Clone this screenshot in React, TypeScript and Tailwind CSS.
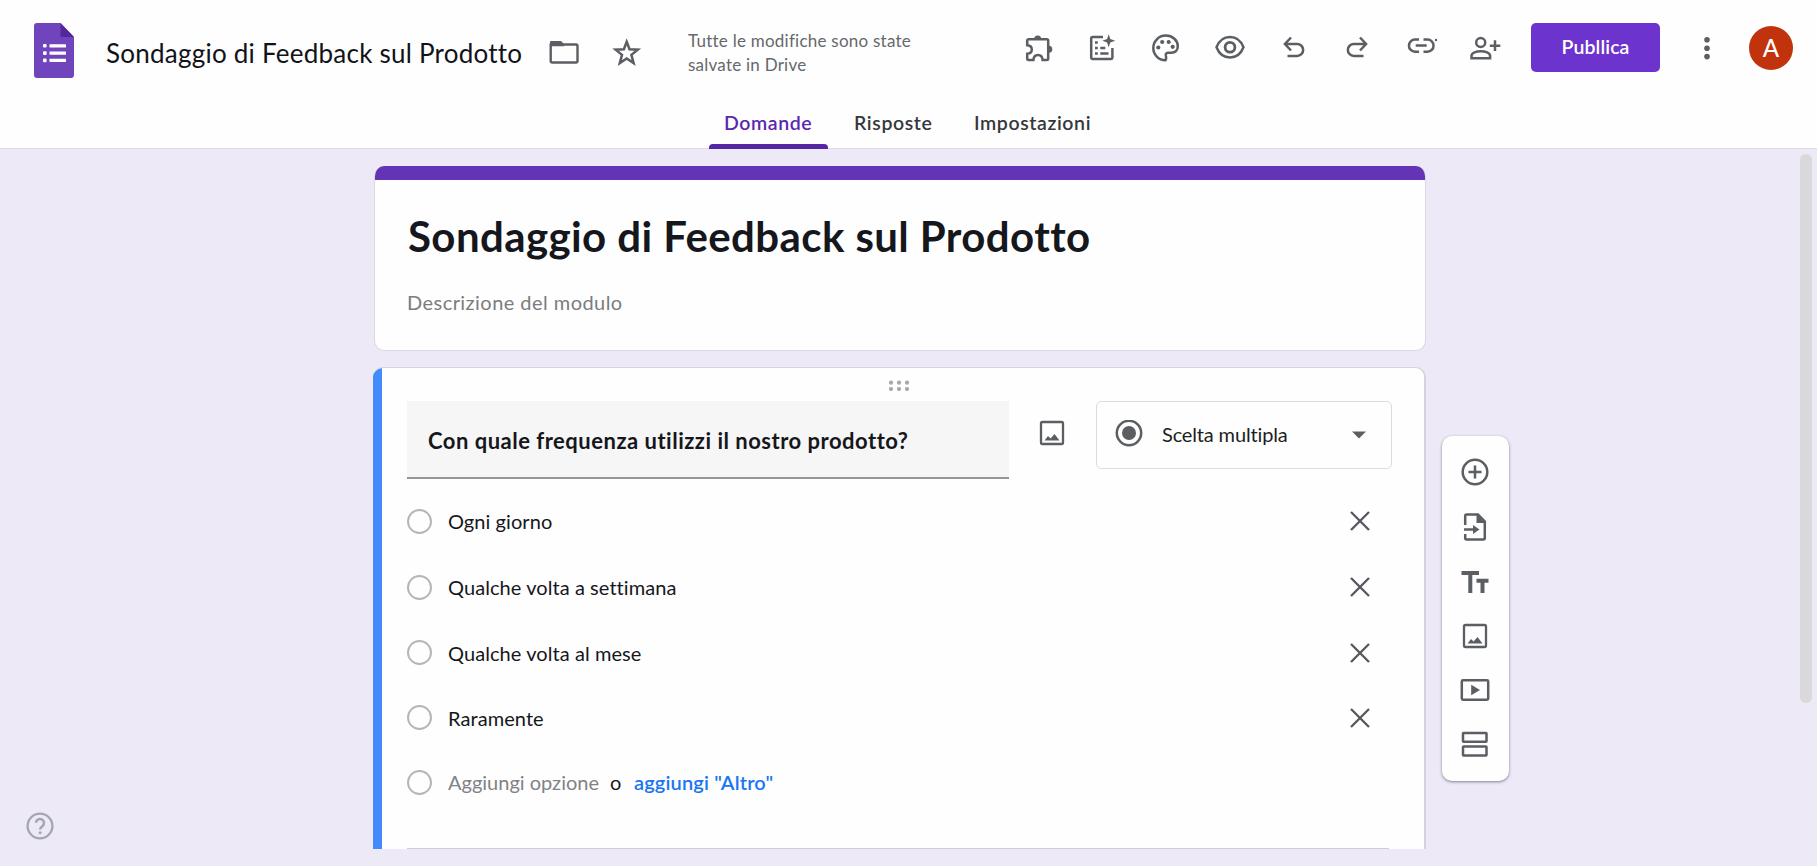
import React from "react";

type IconProps = {
  w: number;
  h: number;
  className?: string;
  children: React.ReactNode;
};

const Icon = ({ w, h, className = "", children }: IconProps) => (
  <svg
    width={w}
    height={h}
    viewBox={`0 0 ${w} ${h}`}
    fill="none"
    stroke="currentColor"
    strokeWidth={2.5}
    className={`shrink-0 ${className}`}
  >
    {children}
  </svg>
);

const FormsLogo = () => (
  <svg width="40" height="55" viewBox="0 0 40 55" className="ml-[34px] mt-[23px] shrink-0">
    <path d="M3 0H26.500L40 14V52a3 3 0 0 1-3 3H3a3 3 0 0 1-3-3V3a3 3 0 0 1 3-3z" fill="#7044bd" />
    <path d="M26.500 0L40 14H26.500z" fill="#53289b" />
    <g fill="#fff">
      <rect x="9" y="21" width="3.600" height="3.600" rx="1" />
      <rect x="9" y="28.300" width="3.600" height="3.600" rx="1" />
      <rect x="9" y="35.600" width="3.600" height="3.600" rx="1" />
      <rect x="15.500" y="21.200" width="16.500" height="3.200" rx="0.500" />
      <rect x="15.500" y="28.500" width="16.500" height="3.200" rx="0.500" />
      <rect x="15.500" y="35.800" width="16.500" height="3.200" rx="0.500" />
    </g>
  </svg>
);

const ImageIcon = ({ className = "" }: { className?: string }) => (
  <Icon w={26} h={26} className={className}>
    <rect x="2" y="2" width="22" height="22" rx="1.500" strokeWidth={2.3} />
    <path d="M5.500 20.500L9 16l2.600 2.500L15.500 14l5 6.500z" fill="currentColor" stroke="none" />
  </Icon>
);

const Header = () => (
  <header className="h-[149px] border-b border-[#dedbe4] bg-[#fefefe]">
    <div className="flex h-[100px] items-start text-[#5b5e63]">
      <FormsLogo />
      <h1 className="ml-8 mt-[36px] w-[430px] whitespace-nowrap text-[26px] leading-[34px] tracking-[0.24px] text-[#111318]">
        Sondaggio di Feedback sul Prodotto
      </h1>
      <Icon w={30} h={24} className="ml-[13px] mt-[40px]">
        <path d="M1.700 3.500V21a1.500 1.500 0 0 0 1.500 1.500H27a1.500 1.500 0 0 0 1.500-1.500V6a1.500 1.500 0 0 0-1.500-1.500H14" strokeWidth={2.400} />
        <path d="M2 1H12l3 3v2.200H1V2a1 1 0 0 1 1-1z" fill="currentColor" stroke="none" />
      </Icon>
      <Icon w={30} h={30} className="ml-[33px] mt-[38px]">
        <path
          d="M14.700 3.800L17.500 11.300L25.800 11.700L19.400 16.900L21.600 25L14.700 20.400L7.800 25L10 16.900L3.600 11.700L11.900 11.300z"
          strokeWidth={2.500}
        />
      </Icon>
      <p className="ml-[46px] mt-[29px] w-[280px] text-[17px] leading-[23.500px] tracking-[0.24px] text-[#65686c]">
        Tutte le modifiche sono state
        <br />
        salvate in Drive
      </p>

      <Icon w={30} h={30} className="ml-[56px] mt-[33px]">
        <path
          d="M4.500 6.200H22.800a1.400 1.400 0 0 1 1.400 1.400V25.600a1.400 1.400 0 0 1-1.400 1.400H18.600c-.2-3.200-1.700-5-4.600-5s-4.400 1.800-4.600 5H4.600A1.400 1.400 0 0 1 3.200 25.600V20.800c2.800-.2 4.600-1.700 4.600-4.300s-1.800-4.100-4.600-4.300V7.600a1.400 1.400 0 0 1 1.300-1.400z"
        />
        <path d="M10.200 6a3.500 3.500 0 0 1 7 0zM24.800 12.800a3.500 3.500 0 0 1 0 7z" fill="currentColor" stroke="none" />
      </Icon>
      <Icon w={30} h={30} className="ml-[34px] mt-[33px]">
        <path d="M15 4H4.600A1.400 1.400 0 0 0 3.200 5.400V24.600A1.400 1.400 0 0 0 4.600 26H23a1.400 1.400 0 0 0 1.400-1.400V15" />
        <path
          d="M20.700 1.300L22.300 6L27.200 7.700L22.300 9.400L20.700 14.300L19.100 9.400L14.300 7.700L19.100 6z"
          fill="currentColor"
          stroke="none"
        />
        <path d="M7 9.500h2.800M7 15h2.800M7 20.500h2.800M12.300 15h5M12.300 20.500h8.200" />
      </Icon>
      <Icon w={30} h={30} className="ml-[33px] mt-[33px]">
        <path d="M14.500 27.300C7.500 27 2.300 21.700 2.300 15S7.700 2.600 14.700 2.600S26.800 7.400 26.800 13.300c0 4-2.700 6.400-6.300 6.400h-3.200c-1.700 0-2.700 1.100-2.500 2.700.3 1.800.9 3.100-.3 4.900z" />
        <g fill="currentColor" stroke="none">
          <circle cx="7.300" cy="14.500" r="2.100" />
          <circle cx="11.200" cy="9" r="2.100" />
          <circle cx="17.700" cy="9" r="2.100" />
          <circle cx="21.700" cy="13.800" r="2.100" />
        </g>
      </Icon>
      <Icon w={30} h={24} className="ml-[34px] mt-[35px]">
        <path d="M1.500 12.300C4 6 9 2.100 15 2.100S26 6 28.500 12.300C26 18.600 21 22.500 15 22.500S4 18.600 1.500 12.300z" />
        <circle cx="15" cy="12.300" r="4.900" strokeWidth={2.800} />
      </Icon>
      <Icon w={22} h={22} className="ml-[38px] mt-[36px]">
        <path d="M8 1.500L1.900 8L8 14.500M2.500 8H14.200a5.900 5.900 0 0 1 0 11.900H4.500" />
      </Icon>
      <Icon w={22} h={22} className="ml-[41px] mt-[36px]">
        <path d="M14 1.500L20.100 8L14 14.500M19.500 8H7.800a5.900 5.900 0 0 0 0 11.900H17.500" />
      </Icon>
      <Icon w={32} h={20} className="ml-[38px] mt-[36px]">
        <path d="M13 3.600H9a6 6 0 0 0 0 12.100h4M17.500 3.600h4a6 6 0 0 1 0 12.100h-4M9.700 9.600h11" />
        <circle cx="30" cy="4" r="1.200" fill="currentColor" stroke="none" />
      </Icon>
      <Icon w={32} h={26} className="ml-[31px] mt-[35px]">
        <circle cx="11.700" cy="7.500" r="4.500" />
        <path d="M2.500 23.300V20.800c0-3.200 5-4.600 9.300-4.600s9.300 1.400 9.300 4.600V23.300zM26 5.300V16M20.800 10.700H31.300" />
      </Icon>
      <button className="ml-[30px] mt-[23px] h-[49px] w-[129px] rounded-[5px] bg-[#6c33cf] pb-px text-[19.500px] font-semibold tracking-[0.1px] text-white">
        Publlica
      </button>
      <Icon w={8} h={26} className="ml-[43px] mt-[35px]">
        <g fill="currentColor" stroke="none">
          <circle cx="4" cy="4.700" r="2.800" />
          <circle cx="4" cy="13.200" r="2.800" />
          <circle cx="4" cy="21.600" r="2.800" />
        </g>
      </Icon>
      <div className="ml-[38px] mt-[26px] flex size-11 items-center justify-center rounded-full bg-[#c1330d] text-[24px] font-medium text-white">
        A
      </div>
    </div>
    <nav className="ml-[709px] flex h-[49px] whitespace-nowrap text-[19.500px] font-semibold leading-[46px] tracking-[0.6px] text-[#35373c]">
      <div className="w-[119px] shrink-0 text-[#5a27b0]">
        <div className="h-11 pl-[15px]">Domande</div>
        <div className="h-[5px] rounded-t-[4px] bg-[#5426a4]" />
      </div>
      <div className="ml-[26px] w-[120px]">Risposte</div>
      <div className="w-[120px]">Impostazioni</div>
    </nav>
  </header>
);

const TitleCard = () => (
  <section className="h-[185px] w-[1052px] overflow-hidden rounded-[10px] border border-t-0 border-[#dcd8e4] bg-[#fefefe]">
    <div className="h-[14px] bg-[#6434b6]" />
    <h2 className="ml-[33px] mt-[31px] whitespace-nowrap text-[42px] font-bold leading-[50px] tracking-[0.4px] text-[#15171c]">
      Sondaggio di Feedback sul Prodotto
    </h2>
    <p className="ml-[32px] mt-[29px] text-[20px] leading-6 tracking-[0.45px] text-[#7a7c80]">Descrizione del modulo</p>
  </section>
);

const Option = ({ label, className }: { label: string; className: string }) => (
  <div className={`flex items-center ${className}`}>
    <span className="size-[25px] rounded-full border-2 border-[#b6b6b9]" />
    <span className="ml-4 text-[20px] leading-6 tracking-[0.07px] text-[#15171c]">{label}</span>
    <Icon w={22} h={22} className="ml-auto mr-[21px] text-[#55585e]">
      <path d="M2 2L20 20M20 2L2 20" strokeWidth={2.300} />
    </Icon>
  </div>
);

const QuestionCard = () => (
  <section className="-ml-px h-[482px] w-[1053px] overflow-hidden rounded-t-[10px] border-r-2 border-t border-[#d6d3de] bg-[#fefefe]">
    <div className="flex h-full border-l-[9px] border-[#438bfb] pl-[25px]">
      <div className="w-[985px] shrink-0">
        <div className="flex h-[33px] justify-center pr-[2px] pt-[12px]">
          <Icon w={22} h={12} className="text-[#a6a6a9]">
            <g fill="currentColor" stroke="none">
              <circle cx="3" cy="2.700" r="2.100" />
              <circle cx="11" cy="2.700" r="2.100" />
              <circle cx="19" cy="2.700" r="2.100" />
              <circle cx="3" cy="9" r="2.100" />
              <circle cx="11" cy="9" r="2.100" />
              <circle cx="19" cy="9" r="2.100" />
            </g>
          </Icon>
        </div>
        <div className="flex h-[78px] items-start">
          <div className="h-[78px] w-[602px] shrink-0 border-b-2 border-[#94959b] bg-[#f6f6f6] pl-[21px] text-[22px] font-bold leading-[80px] tracking-[0.5px] text-[#15171c]">
            Con quale frequenza utilizzi il nostro prodotto?
          </div>
          <ImageIcon className="ml-[30px] mt-[19px] text-[#5b5e63]" />
          <div className="ml-[31px] flex h-[68px] w-[296px] shrink-0 items-center rounded-[5px] border border-[#dcdce0] pb-[2px] pl-[18px] text-[#5b5e63]">
            <Icon w={28} h={28}>
              <circle cx="14" cy="13" r="12.200" />
              <circle cx="14" cy="13" r="7" fill="currentColor" stroke="none" />
            </Icon>
            <span className="ml-[19px] text-[20px] tracking-[-0.15px] text-[#1c1e22]">Scelta multipla</span>
            <Icon w={14} h={8} className="ml-auto mr-[25px] mt-[2px]">
              <path d="M0 .5h14L7 7.500z" fill="currentColor" stroke="none" />
            </Icon>
          </div>
        </div>
        <Option label="Ogni giorno" className="mt-[9px] h-[66px]" />
        <Option label="Qualche volta a settimana" className="h-[66px]" />
        <Option label="Qualche volta al mese" className="h-[65px]" />
        <Option label="Raramente" className="h-[65px]" />
        <div className="flex h-[65px] items-center whitespace-nowrap text-[20px] leading-6">
          <span className="size-[25px] rounded-full border-2 border-[#b6b6b9]" />
          <span className="mb-px ml-4 w-[162px] text-[#808286]">Aggiungi opzione</span>
          <span className="mb-px w-[24px] text-[#15171c]">o</span>
          <span className="mb-px font-semibold tracking-[0.15px] text-[#1a76f2]">aggiungi "Altro"</span>
        </div>
        <div className="mt-[33px] h-px w-[982px] bg-[#cfced8]" />
      </div>
    </div>
  </section>
);

const SideToolbar = () => (
  <aside className="ml-4 mt-[270px] flex h-[345px] w-[67px] flex-col items-center rounded-[10px] bg-[#fefefe] pr-[2px] pt-[22px] text-[#5b5e63] shadow-[0_1px_3px_rgba(40,35,60,0.55)]">
    <Icon w={28} h={28}>
      <circle cx="14" cy="14" r="12.300" />
      <path d="M14 7.500v13M7.500 14h13" />
    </Icon>
    <Icon w={26} h={30} className="mt-[26px]">
      <path d="M3.200 13V4a1.400 1.400 0 0 1 1.400-1.400H16L22.800 9.500V26a1.400 1.400 0 0 1-1.400 1.400H4.600A1.400 1.400 0 0 1 3.200 26V22" />
      <path d="M14.500 2L23.500 11H14.500z" fill="currentColor" stroke="none" />
      <path d="M2 17.500H12" />
      <path d="M11 13L17.500 17.500L11 22z" fill="currentColor" stroke="none" />
    </Icon>
    <Icon w={28} h={22} className="mt-[29px]">
      <path d="M.5 2H18M9.300 2V22" strokeWidth={4} />
      <path d="M15.500 9.700H27.500M21.500 9.700V22" strokeWidth={4} />
    </Icon>
    <ImageIcon className="mt-[30px]" />
    <Icon w={30} h={24} className="mt-[29px]">
      <rect x="1.800" y="2.200" width="26.400" height="19.600" rx="1.200" />
      <path d="M11.200 6.800L20 12L11.200 17.200z" fill="currentColor" stroke="none" />
    </Icon>
    <Icon w={28} h={26} className="mt-[29px]">
      <rect x="2" y="2" width="23.500" height="8.800" rx="0.500" />
      <rect x="2" y="15.600" width="23.500" height="8.800" rx="0.500" />
    </Icon>
  </aside>
);

export default function App() {
  return (
    <div className="flex h-[866px] w-[1817px] flex-col overflow-hidden bg-[#eee9f7] font-['Lato','Open_Sans',sans-serif] [font-variant-ligatures:none]">
      <Header />
      <main className="flex h-[717px] items-start">
        <div className="flex h-full w-[374px] shrink-0 items-end pb-[26px] pl-[26px]">
          <Icon w={28} h={28} className="text-[#a3a6ad]">
            <circle cx="14" cy="14" r="12.400" strokeWidth={2.300} />
            <path d="M10 10.800a4 4 0 1 1 6.600 3.200c-1.500 1.200-2.500 1.700-2.500 3.600" />
            <circle cx="14.100" cy="20.800" r="1.500" fill="currentColor" stroke="none" />
          </Icon>
        </div>
        <div className="flex flex-col gap-4 pt-[17px]">
          <TitleCard />
          <QuestionCard />
        </div>
        <div className="pt-[17px]">
          <SideToolbar />
        </div>
        <div className="ml-auto mr-[5px] mt-[5px] h-[549px] w-3 rounded-full bg-[#d9d9da]" />
      </main>
    </div>
  );
}
